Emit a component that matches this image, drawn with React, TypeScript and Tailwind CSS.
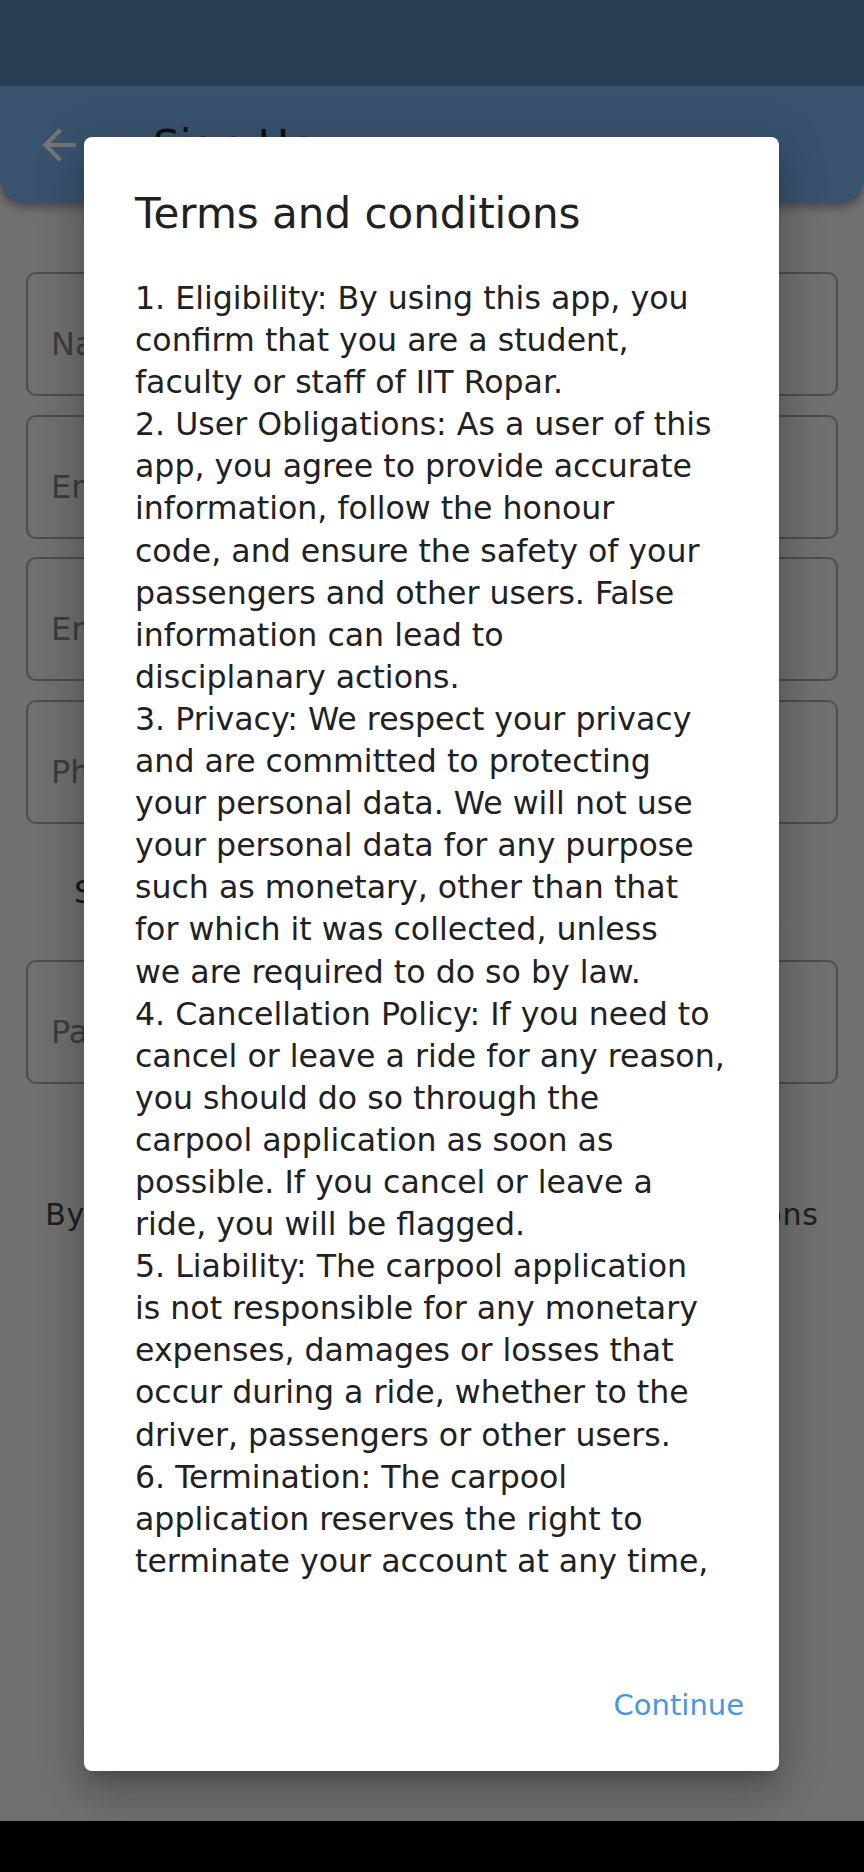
import React from "react"

const terms = [
    "1. Eligibility: By using this app, you",
    "confirm that you are a student,",
    "faculty or staff of IIT Ropar.",
    "2. User Obligations: As a user of this",
    "app, you agree to provide accurate",
    "information, follow the honour",
    "code, and ensure the safety of your",
    "passengers and other users. False",
    "information can lead to",
    "disciplanary actions.",
    "3. Privacy: We respect your privacy",
    "and are committed to protecting",
    "your personal data. We will not use",
    "your personal data for any purpose",
    "such as monetary, other than that",
    "for which it was collected, unless",
    "we are required to do so by law.",
    "4. Cancellation Policy: If you need to",
    "cancel or leave a ride for any reason,",
    "you should do so through the",
    "carpool application as soon as",
    "possible. If you cancel or leave a",
    "ride, you will be flagged.",
    "5. Liability: The carpool application",
    "is not responsible for any monetary",
    "expenses, damages or losses that",
    "occur during a ride, whether to the",
    "driver, passengers or other users.",
    "6. Termination: The carpool",
    "application reserves the right to",
    "terminate your account at any time,",
]

const fields = ["Name", "Entry Number", "Email", "Phone Number"]

function ArrowBack() {
    return (
        <svg width="50" height="50" viewBox="0 0 24 24" fill="#ffffff">
            <path d="M20 11H7.83l5.59-5.59L12 4l-8 8 8 8 1.41-1.41L7.83 13H20v-2z" />
        </svg>
    )
}

function Field({label}: {label: string}) {
    return (
        <div className="h-[124px] border-2 border-[#a9a9a9] rounded-[10px] pl-[23px] pt-[50px] text-[32px] leading-[40px] text-[#858585]">
            {label}
        </div>
    )
}

export default function App() {
    return (
        <div className="relative w-[864px] h-[1872px] overflow-hidden bg-black font-['DejaVu_Sans',sans-serif]">
            {/* page under the dialog */}
            <div className="h-[1821px] bg-[#f3f3f3] flex flex-col">
                <div className="h-[86px] bg-[#5b87b9]" />
                <div className="h-[117px] bg-[#7cb5f2] rounded-b-[24px] shadow-[0_4px_10px_rgba(0,0,0,0.35)] flex items-center pl-[34px]">
                    <ArrowBack />
                    <div className="ml-[69px] mt-[2px] text-[42px] leading-[50px] text-[#222]">Sign Up</div>
                </div>
                <div className="flex flex-col px-[26px] pt-[69px] gap-[18.5px]">
                    {fields.map(f => <Field key={f} label={f} />)}
                </div>
                <div className="mx-[74px] mt-[40px] h-[61px] border-b-2 border-white text-[32px] leading-[40px] text-[#333] pt-[8px]">
                    Select Gender
                </div>
                <div className="px-[26px] mt-[35px]">
                    <Field label="Password" />
                </div>
                <div className="mt-[111px] text-center whitespace-nowrap text-[30px] leading-[40px] tracking-[0.8px] text-[#444]">
                    By signing up you agree to Terms and Conditions
                </div>
            </div>

            {/* scrim */}
            <div className="absolute left-0 top-0 w-[864px] h-[1821px] bg-[rgba(0,0,0,0.541)]" />

            {/* dialog */}
            <div className="absolute left-[84px] top-[137px] w-[695px] bg-white rounded-[8px] flex flex-col pt-[53px] pl-[51px] pr-[35px] pb-[48px] shadow-[0_11px_15px_-7px_rgba(0,0,0,0.2),0_24px_38px_3px_rgba(0,0,0,0.14),0_9px_46px_8px_rgba(0,0,0,0.12)]">
                <div className="text-[42px] leading-[48px] text-[#212121] whitespace-nowrap">Terms and conditions</div>
                <div className="mt-[39px] h-[1305px] text-[31.6px] leading-[42.1px] text-[#212121]">
                    {terms.map((t, i) => (
                        <div key={i} className="whitespace-nowrap">{t}</div>
                    ))}
                </div>
                <div className="mt-[105px] flex justify-end">
                    <div className="text-[29px] leading-[36px] text-[#4a95ea]">Continue</div>
                </div>
            </div>
        </div>
    )
}
